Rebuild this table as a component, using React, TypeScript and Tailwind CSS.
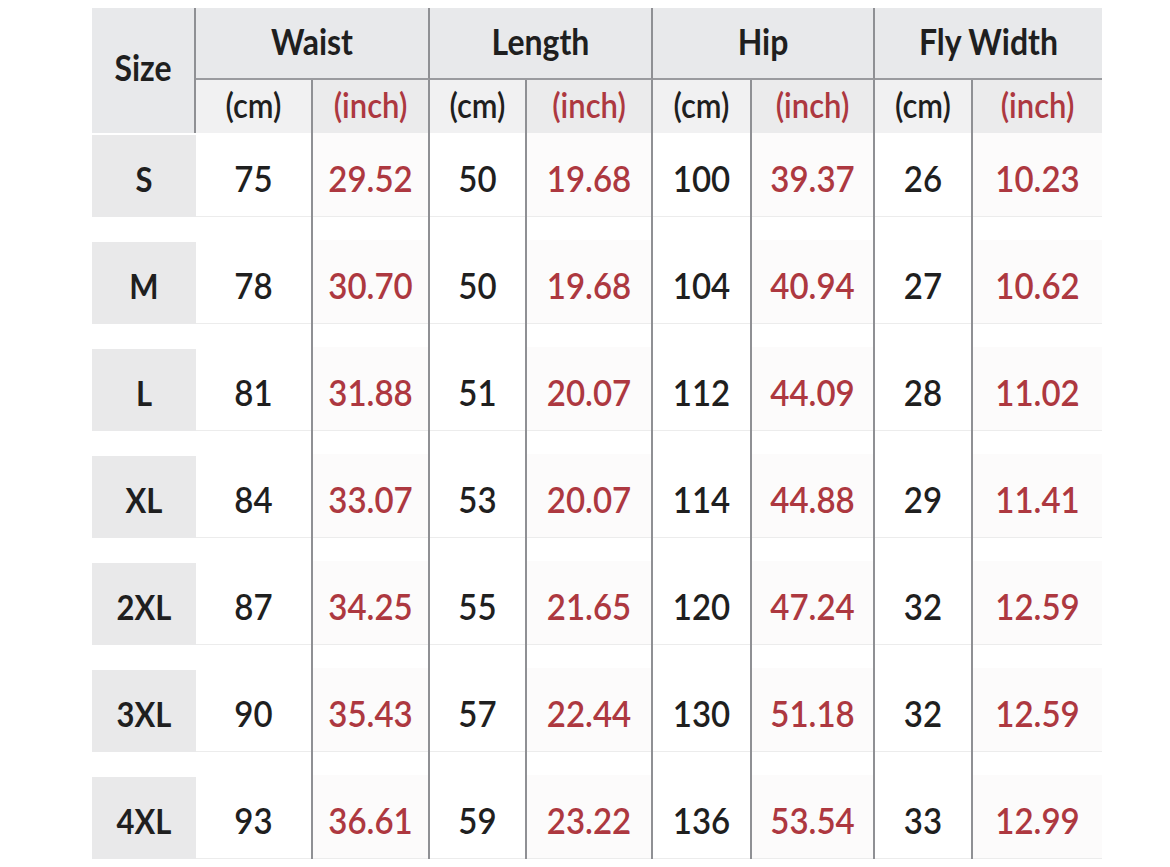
const rows = [
  { size: "S", w: ["75", "29.52"], l: ["50", "19.68"], h: ["100", "39.37"], f: ["26", "10.23"] },
  { size: "M", w: ["78", "30.70"], l: ["50", "19.68"], h: ["104", "40.94"], f: ["27", "10.62"] },
  { size: "L", w: ["81", "31.88"], l: ["51", "20.07"], h: ["112", "44.09"], f: ["28", "11.02"] },
  { size: "XL", w: ["84", "33.07"], l: ["53", "20.07"], h: ["114", "44.88"], f: ["29", "11.41"] },
  { size: "2XL", w: ["87", "34.25"], l: ["55", "21.65"], h: ["120", "47.24"], f: ["32", "12.59"] },
  { size: "3XL", w: ["90", "35.43"], l: ["57", "22.44"], h: ["130", "51.18"], f: ["32", "12.59"] },
  { size: "4XL", w: ["93", "36.61"], l: ["59", "23.22"], h: ["136", "53.54"], f: ["33", "12.99"] },
];

const groups = ["Waist", "Length", "Hip", "Fly Width"];

// the source font is taller and narrower than Lato, so stretch it a bit
function T({ children }: { children: React.ReactNode }) {
  return <span className="inline-block scale-y-[1.13]">{children}</span>;
}

export default function App() {
  return (
    <div className="min-h-[867px] bg-white pl-[92px] pt-2 font-['Lato','Open_Sans',sans-serif] text-[#1f1f1f]">
      <div className="grid w-[1010px] grid-cols-[104px_117px_117px_97px_126px_99px_123px_98px_129px]">
        {/* header */}
        <div className="row-span-2 flex items-center justify-center border-r-2 border-[#8f9094] bg-[#e8e9eb] pb-2 text-[32px] font-bold">
          <T>Size</T>
        </div>
        {groups.map((g, i) => (
          <div
            key={g}
            className={`col-span-2 flex h-[72px] items-center justify-center border-b-2 border-[#9a9b9f] bg-[#e8e9eb] pb-1 text-[32px] font-bold ${
              i < 3 ? "border-r-2 border-r-[#8f9094]" : ""
            }`}
          >
            <T>{g}</T>
          </div>
        ))}
        {groups.map((g, i) => (
          <>
            <div
              key={g + "cm"}
              className="flex h-[53px] items-center justify-center border-r-2 border-[#8f9094] bg-[#f1f1f2] pb-1 text-[31px] font-semibold"
            >
              <T>(cm)</T>
            </div>
            <div
              key={g + "in"}
              className={`flex h-[53px] items-center justify-center bg-[#ebebec] pb-1 text-[31px] font-semibold text-[#ad3840] ${
                i < 3 ? "border-r-2 border-[#8f9094]" : ""
              }`}
            >
              <T>(inch)</T>
            </div>
          </>
        ))}

        {/* body */}
        {rows.map((r, ri) => {
          const last = ri === rows.length - 1;
          const vals = [r.w, r.l, r.h, r.f];
          const rowH = last ? "h-[84px]" : "h-[107px]";
          return (
            <>
              <div key={r.size} className={`${rowH} pt-0.5`}>
                <div className="flex h-[82px] items-center justify-center bg-[#e9e9ea] pt-1 text-[31px] font-bold">
                  <T>{r.size}</T>
                </div>
              </div>
              {vals.map((v, gi) => (
                <>
                  <div key={r.size + gi + "c"} className={`${rowH} border-r-2 border-[#8f9094]`}>
                    <div className="flex h-[84px] items-center justify-center border-b border-[#ececec] pt-1.5 text-[33px] font-semibold">
                      <T>{v[0]}</T>
                    </div>
                  </div>
                  <div
                    key={r.size + gi + "i"}
                    className={`${rowH} ${gi < 3 ? "border-r-2 border-[#8f9094]" : ""}`}
                  >
                    <div className="flex h-[84px] items-center justify-center border-b border-[#ececec] bg-[#fcfbfb] pt-1.5 text-[33px] font-semibold text-[#ad3840]">
                      <T>{v[1]}</T>
                    </div>
                  </div>
                </>
              ))}
            </>
          );
        })}
      </div>
    </div>
  );
}
